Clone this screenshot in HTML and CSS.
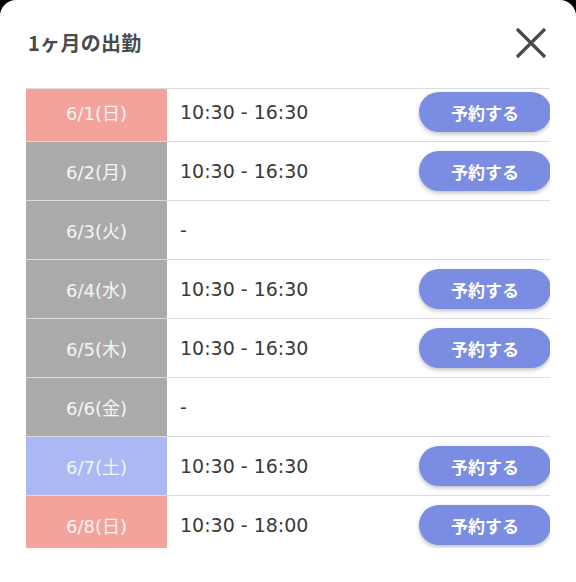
FILE: index.html
```html
<!DOCTYPE html>
<html lang="ja">
<head>
<meta charset="utf-8">
<link rel="stylesheet" href="styles.css">
</head>
<body>
<div class="modal">
  <div class="header">
    <h1 class="title">1ヶ月の出勤</h1>
    <button class="close" aria-label="閉じる">
      <svg width="32" height="32" viewBox="0 0 32 32"><path d="M2 2 L30 30 M30 2 L2 30" stroke="#4a4a4a" stroke-width="3.2" fill="none"/></svg>
    </button>
  </div>
  <div class="list">
    <div class="inner">
      <div class="row"><div class="date sun">6/1(日)</div><div class="time">10:30 - 16:30</div><button class="btn">予約する</button></div>
      <div class="row"><div class="date wk">6/2(月)</div><div class="time">10:30 - 16:30</div><button class="btn">予約する</button></div>
      <div class="row"><div class="date wk">6/3(火)</div><div class="time">-</div></div>
      <div class="row"><div class="date wk">6/4(水)</div><div class="time">10:30 - 16:30</div><button class="btn">予約する</button></div>
      <div class="row"><div class="date wk">6/5(木)</div><div class="time">10:30 - 16:30</div><button class="btn">予約する</button></div>
      <div class="row"><div class="date wk">6/6(金)</div><div class="time">-</div></div>
      <div class="row"><div class="date sat">6/7(土)</div><div class="time">10:30 - 16:30</div><button class="btn">予約する</button></div>
      <div class="row"><div class="date sun">6/8(日)</div><div class="time">10:30 - 18:00</div><button class="btn">予約する</button></div>
    </div>
  </div>
</div>
</body>
</html>
```
FILE: styles.css
```css
html, body {
  margin: 0;
  padding: 0;
  background: #000;
  height: 582px;
  overflow: hidden;
}
.modal {
  background: #fff;
  border-radius: 16px 16px 0 0;
  height: 600px;
  padding: 0 26px;
  font-family: "Noto Sans CJK JP", "Noto Sans", sans-serif;
}
.header {
  display: flex;
  align-items: center;
  justify-content: space-between;
  height: 88px;
}
.title {
  margin: -3px 0 0 0;
  font-size: 20px;
  font-weight: 700;
  color: #4a4a4a;
  padding-left: 2px;
  letter-spacing: 0.3px;
}
.close {
  border: 0;
  background: none;
  padding: 0;
  margin: -2px 3px 0 0;
  width: 32px;
  height: 32px;
  display: flex;
}
.list {
  border-top: 1px solid #dcdcdc;
  height: 459px;
  overflow: hidden;
}
.inner {
  margin-top: -6px;
}
.row {
  display: flex;
  align-items: center;
  height: 58px;
  border-bottom: 1px solid #dcdcdc;
}
.date {
  width: 141px;
  align-self: stretch;
  display: flex;
  align-items: center;
  justify-content: center;
  color: #f5f5f5;
  font-family: "DejaVu Sans", "Noto Sans CJK JP", sans-serif;
  font-size: 18px;
  flex-shrink: 0;
}
.sun { background: #f4a39c; }
.wk { background: #aaaaaa; }
.sat { background: #aab9f3; }
.time {
  flex: 1;
  padding-left: 13px;
  font-family: "DejaVu Sans", sans-serif;
  font-size: 19px;
  color: #3a3a3a;
}
.btn {
  width: 132px;
  height: 40px;
  border: 0;
  border-radius: 20px;
  background: #7b8de3;
  color: #fff;
  font-family: "Noto Sans CJK JP", sans-serif;
  font-size: 17px;
  font-weight: 700;
  box-shadow: 0 2px 4px rgba(0,0,0,0.25);
  margin-right: -1px;
  padding: 0;
}
```
